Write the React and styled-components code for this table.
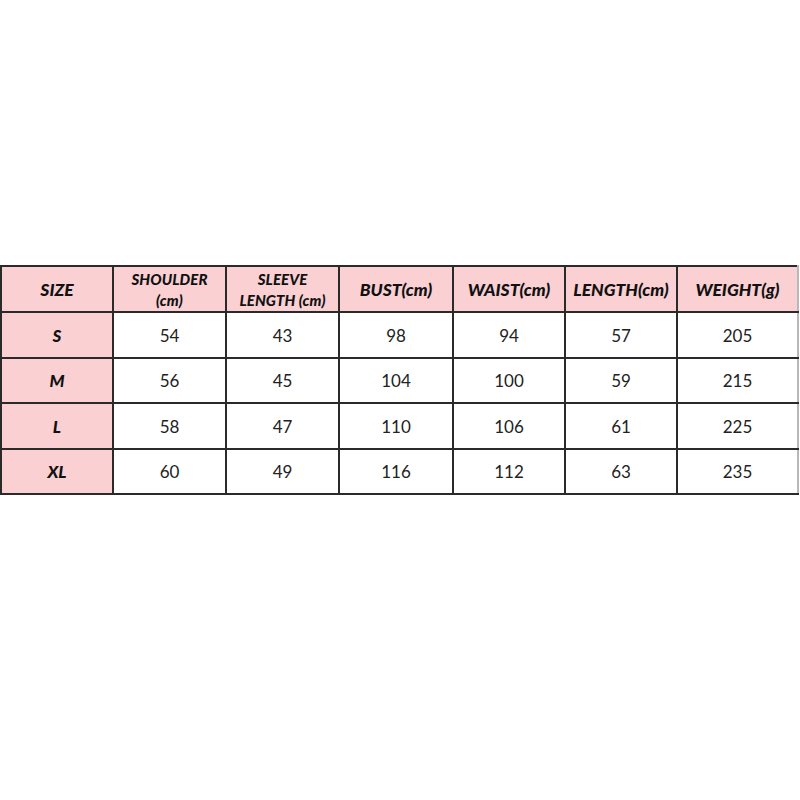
import styled, { createGlobalStyle } from "styled-components";

const GlobalStyle = createGlobalStyle`
  html, body {
    margin: 0;
    padding: 0;
    background: #fff;
  }
  body {
    font-family: Lato, "Open Sans", sans-serif;
    color: #1a1a1a;
  }
`;

const Page = styled.div`
  width: 800px;
  height: 800px;
  padding-top: 265px;
  box-sizing: border-box;
  overflow: hidden;
`;

const Table = styled.table`
  width: 797px;
  margin-left: 0;
  border-collapse: collapse;
  table-layout: fixed;

  td:last-child {
    border-right-color: #b8b8b8;
  }
`;

const Cell = styled.td`
  height: ${(p) => (p.$short ? 43 : 44)}px;
  padding: 0;
  border: 2px solid #2a2a2a;
  text-align: center;
  vertical-align: middle;
  background: ${(p) => (p.$pink ? "#fad0d3" : "#fff")};
  font-size: 17px;
  color: #222;
`;

const HeadCell = styled(Cell)`
  height: 42px;
  font-weight: 900;
  font-style: italic;
  font-size: ${(p) => (p.$small ? 15 : 17.5)}px;
  line-height: ${(p) => (p.$small ? 21 : 20)}px;
  padding-top: 2px;
  color: #111;
  letter-spacing: ${(p) => (p.$small ? 0.1 : 0)}px;
`;

const SizeCell = styled(Cell)`
  font-weight: 900;
  font-style: italic;
  font-size: 17px;
  color: #111;
`;

const columns = [
  { label: "SIZE" },
  { label: ["SHOULDER", "(cm)"], small: true },
  { label: ["SLEEVE", "LENGTH (cm)"], small: true },
  { label: "BUST(cm)" },
  { label: "WAIST(cm)" },
  { label: "LENGTH(cm)" },
  { label: "WEIGHT(g)" },
];

const rows = [
  ["S", 54, 43, 98, 94, 57, 205],
  ["M", 56, 45, 104, 100, 59, 215],
  ["L", 58, 47, 110, 106, 61, 225],
  ["XL", 60, 49, 116, 112, 63, 235],
];

const widths = [112, 113, 113, 114, 112, 112, 121];

export default function App() {
  return (
    <Page>
      <GlobalStyle />
      <Table>
        <colgroup>
          {widths.map((w, i) => (
            <col key={i} style={{ width: w }} />
          ))}
        </colgroup>
        <tbody>
          <tr>
            {columns.map((c, i) => (
              <HeadCell key={i} $pink $small={c.small}>
                {Array.isArray(c.label) ? (
                  <>
                    {c.label[0]}
                    <br />
                    {c.label[1]}
                  </>
                ) : (
                  c.label
                )}
              </HeadCell>
            ))}
          </tr>
          {rows.map((r, ri) => (
            <tr key={ri}>
              <SizeCell $pink $short={ri % 2 === 1}>
                {r[0]}
              </SizeCell>
              {r.slice(1).map((v, i) => (
                <Cell key={i} $short={ri % 2 === 1}>
                  {v}
                </Cell>
              ))}
            </tr>
          ))}
        </tbody>
      </Table>
    </Page>
  );
}
